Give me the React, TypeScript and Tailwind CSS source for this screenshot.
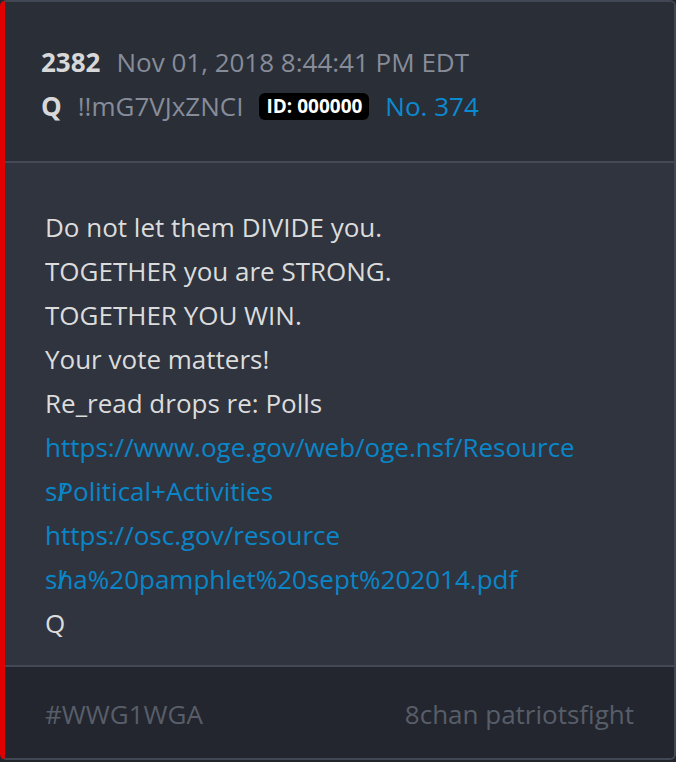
import React from "react";

export default function App() {
  const font = { fontFamily: '"Open Sans", "Noto Sans", sans-serif' };
  return (
    <div className="w-[676px] h-[762px] bg-[#22252c]" style={font}>
      <div className="h-[760px] flex flex-col border-2 border-[#424853] border-l-[5px] border-l-[#e00000] rounded-md overflow-hidden">
        <div className="bg-[#2a2e37] pl-[36px] pt-[38px] h-[161px] text-[26px] leading-[44px] border-b-2 border-[#434955]">
          <div className="flex items-center">
            <span className="font-bold text-[#d8d8d8]">2382</span>
            <span className="ml-[16px] text-[#878c99]">Nov 01, 2018 8:44:41 PM EDT</span>
          </div>
          <div className="flex items-center">
            <span className="font-bold text-[#d8d8d8]">Q</span>
            <span className="ml-[16px] text-[#878c99]">!!mG7VJxZNCI</span>
            <span className="ml-[16px] bg-black text-white font-bold text-[19px] leading-[27px] rounded-[6px] px-[7px]">ID: 000000</span>
            <span className="ml-[16px] text-[#0a8ad0]">No. 374</span>
          </div>
        </div>
        <div className="bg-[#2f343f] pl-[40px] pt-[42px] h-[504px] text-[26px] leading-[44px] text-[#dcdcdc] border-b-2 border-[#434955]">
          <div>Do not let them DIVIDE you.</div>
          <div>TOGETHER you are STRONG.</div>
          <div>TOGETHER YOU WIN.</div>
          <div>Your vote matters!</div>
          <div>Re_read drops re: Polls</div>
          <div className="text-[#0a86c8]">https://www.oge.gov/web/oge.nsf/Resource</div>
          <div className="text-[#0a86c8]">s<span className="inline-block w-0 overflow-visible">/</span>Political+Activities</div>
          <div className="text-[#0a86c8]">https://osc.gov/resource</div>
          <div className="text-[#0a86c8]">s<span className="inline-block w-0 overflow-visible">/</span>ha%20pamphlet%20sept%202014.pdf</div>
          <div>Q</div>
        </div>
        <div className="flex-1 bg-[#23262e] pl-[40px] pr-[40px] pt-[4px] flex items-center justify-between text-[26px] text-[#585e69]">
          <span>#WWG1WGA</span>
          <span>8chan patriotsfight</span>
        </div>
      </div>
    </div>
  );
}
